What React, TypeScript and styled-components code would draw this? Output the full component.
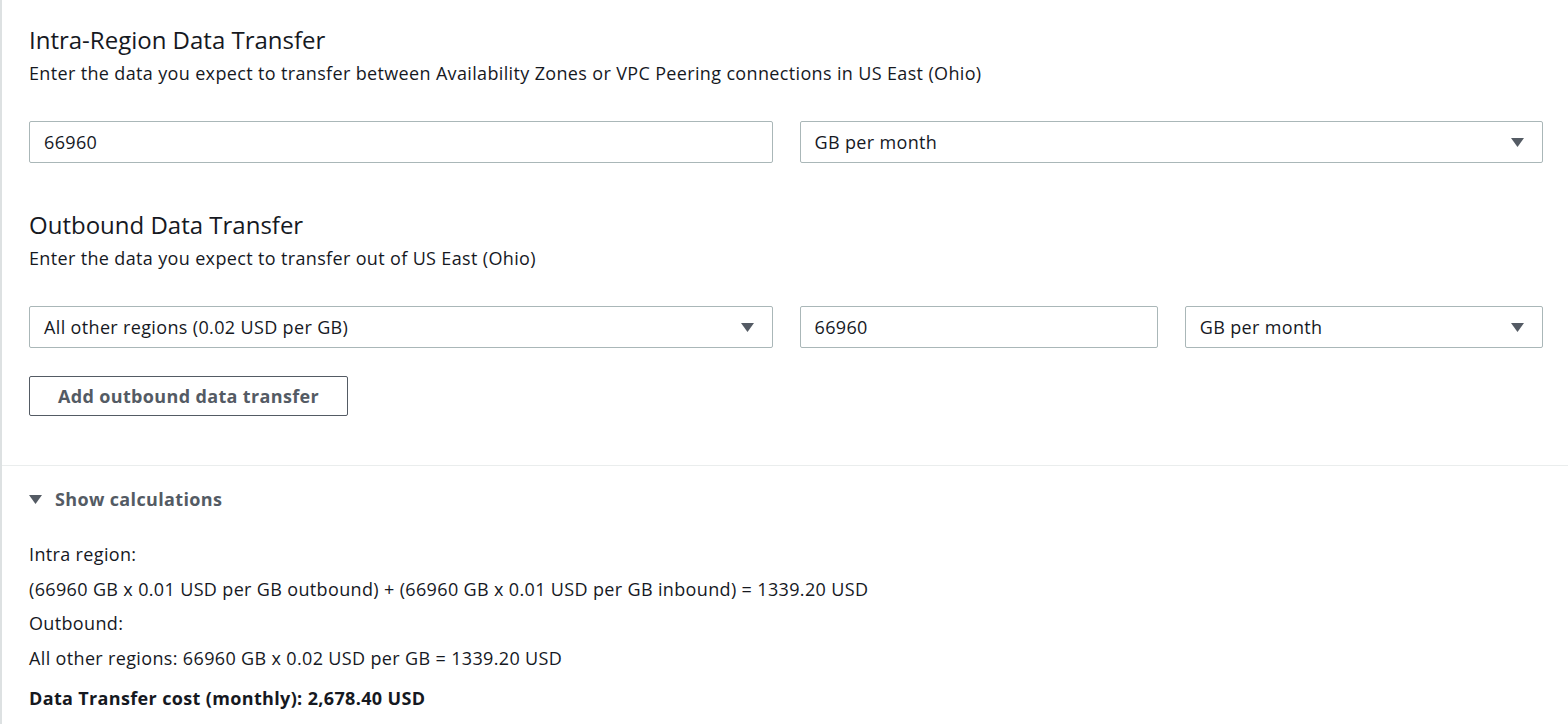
import React from "react";
import styled, { createGlobalStyle } from "styled-components";

const Global = createGlobalStyle`
  html, body { margin: 0; padding: 0; background: #ffffff; }
  body { font-family: "Open Sans", "Noto Sans", Arial, sans-serif; color: #16191f; }
  * { box-sizing: border-box; }
`;

const Page = styled.div`
  border-left: 2px solid #dde1e2;
  min-height: 724px;
  background: #fff;
`;

const Body = styled.div`
  padding: 24px 25px 49px 27px;
`;

const Section = styled.section<{ $gapTop?: number }>`
  margin-top: ${(p) => p.$gapTop ?? 0}px;
`;

const Title = styled.h2`
  margin: 0;
  font-size: 24px;
  line-height: 32px;
  font-weight: 400;
  color: #16191f;
`;

const Sub = styled.p`
  margin: 4px 0 0;
  font-size: 18px;
  line-height: 26px;
  letter-spacing: 0.35px;
  color: #16191f;
`;

const Grid = styled.div`
  display: grid;
  grid-template-columns: repeat(4, 1fr);
  column-gap: 27px;
  margin-top: 35px;
`;

const Field = styled.div<{ $span: number }>`
  grid-column: span ${(p) => p.$span};
  height: 42px;
  border: 1px solid #aab7b8;
  border-radius: 2px;
  display: flex;
  align-items: center;
  padding: 0 18px 0 14px;
  font-size: 18px;
  letter-spacing: 0.35px;
  color: #16191f;
  background: #fff;
`;

const FieldText = styled.span`
  flex: 1;
`;

const Caret = ({ size = 13 }: { size?: number }) => (
  <svg width={size} height={Math.round(size * 0.72)} viewBox="0 0 13 9">
    <path d="M0 0 H13 L6.5 9 Z" fill="#545b64" />
  </svg>
);

const Button = styled.button`
  margin-top: 28px;
  height: 40px;
  padding: 0 28px;
  border: 1px solid #545b64;
  border-radius: 2px;
  background: #fff;
  color: #545b64;
  font-family: inherit;
  font-size: 18px;
  letter-spacing: 0.35px;
  font-weight: 700;
  cursor: pointer;
`;

const Divider = styled.hr`
  margin: 0;
  border: 0;
  border-top: 1px solid #eaeded;
`;

const Calc = styled.div`
  padding: 20px 25px 0 27px;
`;

const Toggle = styled.div`
  display: flex;
  align-items: center;
  gap: 13px;
  font-size: 18px;
  letter-spacing: 0.35px;
  font-weight: 700;
  color: #545b64;
  line-height: 26px;
`;

const Lines = styled.div`
  margin-top: 29px;
`;

const Line = styled.div<{ $bold?: boolean }>`
  font-size: 18px;
  line-height: 26px;
  letter-spacing: 0.35px;
  margin-bottom: 8.5px;
  font-weight: ${(p) => (p.$bold ? 700 : 400)};
  color: #16191f;
`;

const Total = styled(Line)`
  margin-top: 14px;
`;

export default function App() {
  return (
    <Page>
      <Global />
      <Body>
        <Section>
          <Title>Intra-Region Data Transfer</Title>
          <Sub>
            Enter the data you expect to transfer between Availability Zones or VPC Peering
            connections in US East (Ohio)
          </Sub>
          <Grid>
            <Field $span={2}>
              <FieldText>66960</FieldText>
            </Field>
            <Field $span={2}>
              <FieldText>GB per month</FieldText>
              <Caret />
            </Field>
          </Grid>
        </Section>
        <Section $gapTop={46}>
          <Title>Outbound Data Transfer</Title>
          <Sub>Enter the data you expect to transfer out of US East (Ohio)</Sub>
          <Grid>
            <Field $span={2}>
              <FieldText>All other regions (0.02 USD per GB)</FieldText>
              <Caret />
            </Field>
            <Field $span={1}>
              <FieldText>66960</FieldText>
            </Field>
            <Field $span={1}>
              <FieldText>GB per month</FieldText>
              <Caret />
            </Field>
          </Grid>
          <Button>Add outbound data transfer</Button>
        </Section>
      </Body>
      <Divider />
      <Calc>
        <Toggle>
          <Caret />
          <span>Show calculations</span>
        </Toggle>
        <Lines>
          <Line>Intra region:</Line>
          <Line>
            (66960 GB x 0.01 USD per GB outbound) + (66960 GB x 0.01 USD per GB inbound) = 1339.20 USD
          </Line>
          <Line>Outbound:</Line>
          <Line>All other regions: 66960 GB x 0.02 USD per GB = 1339.20 USD</Line>
          <Total $bold>Data Transfer cost (monthly): 2,678.40 USD</Total>
        </Lines>
      </Calc>
    </Page>
  );
}
